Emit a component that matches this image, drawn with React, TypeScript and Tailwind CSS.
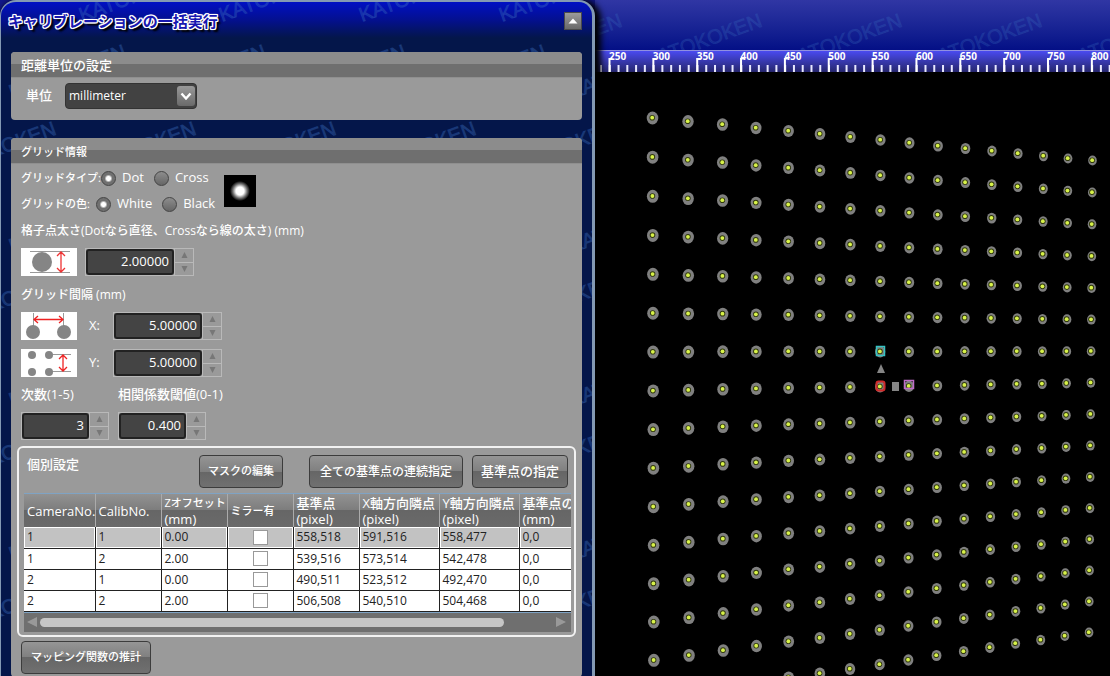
import type { ReactNode } from "react";

const FONT = "font-['Open_Sans','Noto_Sans_CJK_JP',sans-serif]";

const COLUMNS = [
  { lines: ["CameraNo."], width: "w-[71px]" },
  { lines: ["CalibNo."], width: "w-[66px]" },
  { lines: ["Zオフセット", "(mm)"], width: "w-[66px]", small: true },
  { lines: ["ミラー有"], width: "w-[66px]", small: true },
  { lines: ["基準点", "(pixel)"], width: "w-[66px]" },
  { lines: ["X軸方向隣点", "(pixel)"], width: "w-[80px]" },
  { lines: ["Y軸方向隣点", "(pixel)"], width: "w-[80px]" },
  { lines: ["基準点の", "(mm)"], width: "w-[90px]" },
];

const ROWS = [
  { camera: "1", calib: "1", z: "0.00", base: "558,518", x: "591,516", y: "558,477" },
  { camera: "1", calib: "2", z: "2.00", base: "539,516", x: "573,514", y: "542,478" },
  { camera: "2", calib: "1", z: "0.00", base: "490,511", x: "523,512", y: "492,470" },
  { camera: "2", calib: "2", z: "2.00", base: "506,508", x: "540,510", y: "504,468" },
];

// Detected grid columns: x, y of the first row, y of the last row
const GRID = [
  [57.5, 46, 626.5],
  [93, 49.5, 621],
  [127.5, 52.5, 615.5],
  [161, 56, 610.5],
  [193.5, 59, 605.5],
  [225, 62, 601.5],
  [255.5, 65, 597],
  [285.5, 68, 592.5],
  [314.5, 71, 588],
  [343, 74, 583.5],
  [370.5, 76.5, 579.5],
  [397, 79, 575.5],
  [423, 81.5, 571.5],
  [448.5, 84, 568],
  [473, 86.5, 564],
  [497.5, 88.5, 560.5],
];
const GRID_ROWS = 16;

export default function App() {
  return (
    <div
      className={`flex min-h-screen overflow-hidden bg-[#12188c] text-[13px] font-medium text-white ${FONT}`}
    >
      <CalibrationPanel />
      <Viewer />
    </div>
  );
}

function CalibrationPanel() {
  return (
    <section className="relative z-10 flex w-[595px] shrink-0 flex-col overflow-hidden rounded-t-2xl border-t-2 border-r-[3px] border-l border-[#8399b3] bg-[#04164a] bg-[linear-gradient(to_bottom,#0010c4_0,#04108f_18px,#04164a_36px)] pr-[10px] pl-[10px] shadow-[3px_3px_6px_3px_#000]">
      <Watermark startX={-59} startY={20} lines={10} perLine={6} opacity={0.28} />
      <header className="relative flex h-[50px] items-start justify-between">
        <h1 className="-ml-[3px] pt-2 text-[15px] leading-[22px] font-bold text-[#1818b0] [text-shadow:1px_0_#fff,-1px_0_#fff,0_1px_#fff,0_-1px_#fff,1px_1px_#fff,-1px_1px_#fff,1px_-1px_#fff,-1px_-1px_#fff,0_0_2px_#fff,0_0_2px_#fff,2px_2px_2px_#000,3px_3px_2px_#000]">
          キャリブレーションの一括実行
        </h1>
        <button
          aria-label="折りたたむ"
          className="mt-[10px] flex h-[18px] w-[18px] items-center justify-center border border-[#4a4a4a] bg-linear-to-b from-[#9b9b9b] to-[#6a6a6a]"
        >
          <svg width="10" height="6" aria-hidden="true">
            <path d="M5 0.5 L9.5 5.5 H0.5 Z" fill="#fff" />
          </svg>
        </button>
      </header>

      <Group title="距離単位の設定" className="mb-[18px]">
        <div className="flex h-[42px] items-center pb-1.5 pl-[15px]">
          <label htmlFor="unit" className="w-[39px]">
            単位
          </label>
          <div className="relative">
            <select
              id="unit"
              className="h-[26px] w-[132px] appearance-none rounded-[4px] border border-[#333] bg-[#424242] pl-[3px] text-[12px]"
            >
              <option>millimeter</option>
            </select>
            <span className="pointer-events-none absolute top-[3px] right-[2px] flex h-5 w-[18px] items-center justify-center rounded-[3px] bg-linear-to-b from-[#999] to-[#6a6a6a]">
              <svg width="12" height="9" aria-hidden="true">
                <path d="M1.5 1.5 L6 6.5 L10.5 1.5" fill="none" stroke="#fff" strokeWidth="2.4" />
              </svg>
            </span>
          </div>
        </div>
      </Group>

      <Group title="グリッド情報" small className="flex-1">
        <div className="px-1.5 pt-px pb-[3px]">
          <GridSettings />
          <CameraSettings />
          <div className="mt-1 pl-1">
            <PanelButton className="px-[9px] text-[11px]">マッピング関数の推計</PanelButton>
          </div>
        </div>
      </Group>
    </section>
  );
}

function Group({
  title,
  small,
  className,
  children,
}: {
  title: string;
  small?: boolean;
  className: string;
  children: ReactNode;
}) {
  return (
    <section className={`relative overflow-hidden rounded-[4px] bg-[#9a9a9a] ${className}`}>
      <h2
        className={[
          "flex h-[26px] items-center border-b border-[#8f8f8f] bg-[linear-gradient(to_bottom,#8c8c8c_0,#8c8c8c_12px,#6f6f6f_12px)] pt-[3px] pl-[10px] font-medium",
          small ? "text-[11px]" : "text-[13px]",
        ].join(" ")}
      >
        {title}
      </h2>
      {children}
    </section>
  );
}

function GridSettings() {
  return (
    <div className="pl-1">
      <div className="flex items-center">
        <div className="w-[203px]">
          <fieldset className="flex h-[26px] items-center gap-[10px]">
            <legend className="float-left w-[70px] text-[11px] whitespace-nowrap">グリッドタイプ:</legend>
            <Radio name="type" label="Dot" checked />
            <Radio name="type" label="Cross" />
          </fieldset>
          <fieldset className="flex h-[26px] items-center gap-[10px]">
            <legend className="float-left w-[65px] text-[11px] whitespace-nowrap">グリッドの色:</legend>
            <Radio name="color" label="White" checked />
            <Radio name="color" label="Black" />
          </fieldset>
        </div>
        <div className="h-8 w-8 bg-black bg-[radial-gradient(circle,#fff_0,#fff_4px,#777_7px,#000_10px)]" />
      </div>

      <p className="flex h-7 items-center text-[12px]">
        格子点太さ(Dotなら直径、Crossなら線の太さ) (mm)
      </p>
      <div className="flex h-[34px] items-center gap-2">
        <Diagram>
          <path d="M9 3.5H49M9 24.5H49" stroke="#999" />
          <circle cx="21" cy="14" r="10" fill="#858585" />
          <path d="M40 4V24M36 8L40 4L44 8M36 20L40 24L44 20" stroke="#e33" strokeWidth="1.3" fill="none" />
        </Diagram>
        <Spinner label="格子点太さ" value="2.00000" />
      </div>

      <p className="flex h-8 items-center text-[12px]">グリッド間隔 (mm)</p>
      <div className="flex h-[30px] items-center">
        <Diagram>
          <path d="M12.5 1V14M42.5 1V14" stroke="#999" />
          <circle cx="12" cy="20" r="7" fill="#858585" />
          <circle cx="43" cy="20" r="7" fill="#858585" />
          <path d="M13 7.500H42M17 4L13 7.500L17 11M38 4L42 7.500L38 11" stroke="#e22" strokeWidth="1.3" fill="none" />
        </Diagram>
        <label htmlFor="pitch-x" className="w-9 pl-3">
          X:
        </label>
        <Spinner id="pitch-x" value="5.00000" />
      </div>
      <div className="mt-[7px] flex h-[30px] items-center">
        <Diagram>
          <path d="M28 5.500H50M28 22.500H50" stroke="#999" />
          <circle cx="11" cy="6" r="4" fill="#858585" />
          <circle cx="28" cy="6" r="4" fill="#858585" />
          <circle cx="11" cy="23" r="4" fill="#858585" />
          <circle cx="28" cy="23" r="4" fill="#858585" />
          <path d="M42 6V22M38 10L42 6L46 10M38 18L42 22L46 18" stroke="#e22" strokeWidth="1.3" fill="none" />
        </Diagram>
        <label htmlFor="pitch-y" className="w-9 pl-3">
          Y:
        </label>
        <Spinner id="pitch-y" value="5.00000" />
      </div>

      <div className="flex gap-[9px]">
        <div>
          <label htmlFor="order" className="flex h-[34px] items-center">
            次数(1-5)
          </label>
          <Spinner id="order" value="3" narrow />
        </div>
        <div>
          <label htmlFor="threshold" className="flex h-[34px] items-center">
            相関係数閾値(0-1)
          </label>
          <Spinner id="threshold" value="0.400" narrow />
        </div>
      </div>
    </div>
  );
}

function Radio({ name, label, checked }: { name: string; label: string; checked?: boolean }) {
  return (
    <label className="flex items-center gap-1.5">
      <input
        type="radio"
        name={name}
        defaultChecked={checked}
        className="h-[15px] w-[15px] appearance-none rounded-full border border-[#444] bg-linear-to-b from-[#8d8d8d] to-[#666] checked:bg-[radial-gradient(circle,#fff_0,#fff_2px,#707070_4px)]"
      />
      {label}
    </label>
  );
}

function Diagram({ children }: { children: ReactNode }) {
  return (
    <svg width="56" height="28" className="shrink-0 bg-white" aria-hidden="true">
      {children}
    </svg>
  );
}

function Spinner({
  id,
  label,
  value,
  narrow,
}: {
  id?: string;
  label?: string;
  value: string;
  narrow?: boolean;
}) {
  return (
    <div
      className={[
        "flex h-7 border border-[#b9b9b9]",
        narrow ? "w-[88px]" : "w-[109px]",
      ].join(" ")}
    >
      <input
        id={id}
        aria-label={label}
        defaultValue={value}
        className="min-w-0 flex-1 rounded-[3px] border-2 border-[#222] bg-[#444] pr-[3px] text-right text-[13px]"
      />
      <div className="flex w-[19px] flex-col divide-y divide-[#b9b9b9] border-l border-[#b9b9b9]">
        <button aria-label="増やす" className="flex flex-1 items-center justify-center">
          <svg width="7" height="6" aria-hidden="true">
            <path d="M3.5 0L6.500 6H0.500Z" fill="#777" />
          </svg>
        </button>
        <button aria-label="減らす" className="flex flex-1 items-center justify-center">
          <svg width="7" height="6" aria-hidden="true">
            <path d="M3.5 6L6.500 0H0.500Z" fill="#777" />
          </svg>
        </button>
      </div>
    </div>
  );
}

function PanelButton({ className, children }: { className: string; children: ReactNode }) {
  return (
    <button
      className={`h-[33px] rounded-[4px] border border-[#3c3c3c] bg-[linear-gradient(to_bottom,#959595_0,#7f7f7f_50%,#666_50%,#707070_100%)] font-medium whitespace-nowrap ${className}`}
    >
      {children}
    </button>
  );
}

function CameraSettings() {
  return (
    <section className="mt-1.5 rounded-md border-2 border-[#f2f2f2] pt-[7px] pr-[3px] pb-[3px] pl-[5px]">
      <header className="flex items-start pr-[3px] pl-[3px]">
        <h3 className="flex-1 font-medium">個別設定</h3>
        <PanelButton className="mr-[26px] px-2 text-[11px]">マスクの編集</PanelButton>
        <PanelButton className="mr-[9px] px-[10px] text-[12px]">全ての基準点の連続指定</PanelButton>
        <PanelButton className="px-2 text-[13px]">基準点の指定</PanelButton>
      </header>

      <div className="mt-[5px] overflow-hidden border-t border-b border-[#7fa3c4]">
        <table className="w-[585px] table-fixed border-collapse bg-white text-[12px] text-[#222]">
          <thead>
            <tr className="h-[33px] bg-[linear-gradient(to_bottom,#929292_0,#7c7c7c_50%,#666_50%,#6a6a6a_100%)] text-[13px] text-white">
              {COLUMNS.map((col, i) => (
                <th
                  key={i}
                  className={`border-r border-[#ababab] p-0 pl-[3px] text-left leading-4 font-medium whitespace-nowrap ${col.width}`}
                >
                  {col.lines.map((line, n) => (
                    <span
                      key={line}
                      className={col.small && n === 0 ? "block text-[11px]" : "block"}
                    >
                      {line}
                    </span>
                  ))}
                </th>
              ))}
            </tr>
          </thead>
          <tbody>
            {ROWS.map((row, i) => (
              <TableRow key={i} row={row} selected={i === 0} />
            ))}
          </tbody>
        </table>
      </div>

      <div className="flex h-[19px] items-center bg-[#6f6f6f] px-[2px]">
        <svg width="14" height="10" aria-hidden="true">
          <path d="M11 0V10L1 5Z" fill="#999" />
        </svg>
        <div className="flex-1">
          <div className="h-[9px] w-[90%] rounded-full bg-[#c6c6c6]" />
        </div>
        <svg width="14" height="10" aria-hidden="true">
          <path d="M1 0V10L11 5Z" fill="#999" />
        </svg>
      </div>
    </section>
  );
}

function TableRow({ row, selected }: { row: (typeof ROWS)[number]; selected: boolean }) {
  const box = [
    "border-r border-b border-[#222] p-0 leading-5 font-normal",
    selected ? "bg-[#c2c2c2] shadow-[inset_0_0_0_1px_#fff]" : "bg-white",
  ].join(" ");
  const cell = `${box} pl-[3px]`;
  return (
    <tr className="h-[21px]">
      <td className={cell}>{row.camera}</td>
      <td className={cell}>{row.calib}</td>
      <td className={cell}>{row.z}</td>
      <td className={box}>
        <input
          type="checkbox"
          aria-label={`ミラー有 ${row.camera}-${row.calib}`}
          className="mx-auto block h-[15px] w-[15px] appearance-none border border-[#999] bg-white"
        />
      </td>
      <td className={cell}>{row.base}</td>
      <td className={cell}>{row.x}</td>
      <td className={cell}>{row.y}</td>
      <td className={cell}>0,0</td>
    </tr>
  );
}

function Viewer() {
  return (
    <main className="flex min-w-0 flex-1 flex-col bg-black">
      <div className="relative h-[50px] overflow-hidden bg-linear-to-b from-[#3036a4] to-[#040f86]">
        <Watermark startX={-87} startY={68} lines={1} perLine={5} opacity={0.2} />
      </div>
      <Ruler />
      <svg className="w-full flex-1" role="img" aria-label="検出された格子点">
        {GRID.map(([x, top, bottom], c) =>
          Array.from({ length: GRID_ROWS }, (_, r) => {
            const last = GRID_ROWS - 1;
            const cx = x + ((1.5 - 0.33 * c) * r) / last;
            // lens distortion pushes the middle rows down a little
            const cy = top + ((bottom - top) * r) / last + (8 * r * (last - r)) / (last * last);
            return <GridDot key={`${c}-${r}`} cx={cx} cy={cy} size={5.8 - c * 0.1} />;
          }),
        )}
        <rect x="281.500" y="274.500" width="8" height="9" fill="none" stroke="#35c3c3" strokeWidth="1.500" />
        <rect x="281.500" y="309.500" width="8" height="9" rx="2" fill="none" stroke="#d02a2a" strokeWidth="2" />
        <rect x="309.500" y="308.500" width="9" height="8" fill="none" stroke="#c06cc8" strokeWidth="1.500" />
        <path d="M286 292L290 301H282Z" fill="#858585" />
        <rect x="297" y="310" width="7" height="9" fill="#858585" />
      </svg>
    </main>
  );
}

function GridDot({ cx, cy, size }: { cx: number; cy: number; size: number }) {
  return (
    <g>
      <ellipse cx={cx} cy={cy} rx={size} ry={size + 0.7} fill="#808080" />
      <circle cx={cx - 0.3} cy={cy - 0.3} r="2.800" fill="#30380c" />
      <circle cx={cx - 0.3} cy={cy - 0.3} r="1.900" fill="#d8f24a" />
    </g>
  );
}

function Ruler() {
  const minor = Array.from({ length: 59 }, (_, i) => 5 + i * 8.77);
  const major = Array.from({ length: 12 }, (_, i) => i);
  return (
    <svg
      className="h-[22px] w-full border-t border-[#9090e0] bg-linear-to-b from-[#4a4af0] to-[#26266e]"
      aria-hidden="true"
    >
      {minor.map((x) => (
        <rect key={x} x={x} y="14" width="2" height="7" fill="#e8e8ff" />
      ))}
      {major.map((i) => (
        <g key={i} fill="#fff">
          <path d={`M${13.5 + i * 43.85} 7h4v1.500h-2v12.500h-2z`} />
          <text x={14 + i * 43.85} y="9" fontSize="10" fontWeight="700">
            {250 + i * 50}
          </text>
        </g>
      ))}
    </svg>
  );
}

// Slanted brand name repeated over the whole background
function Watermark({
  startX,
  startY,
  lines,
  perLine,
  opacity,
}: {
  startX: number;
  startY: number;
  lines: number;
  perLine: number;
  opacity: number;
}) {
  const marks = Array.from({ length: lines * perLine }, (_, i) => {
    const line = Math.floor(i / perLine);
    return { x: startX + (i % perLine) * 140 - (line % 2) * 70, y: startY + line * 77 };
  });
  return (
    <svg className="pointer-events-none absolute inset-0 h-full w-full" aria-hidden="true">
      {marks.map(({ x, y }) => (
        <text
          key={`${x}-${y}`}
          transform={`translate(${x} ${y}) rotate(-20)`}
          fontSize="20"
          fontFamily="Liberation Sans"
          fontWeight="400"
          fill="#3d6fc0"
          stroke="#3d6fc0"
          fillOpacity={opacity}
          strokeOpacity={opacity}
        >
          KATOKOKEN
        </text>
      ))}
    </svg>
  );
}
